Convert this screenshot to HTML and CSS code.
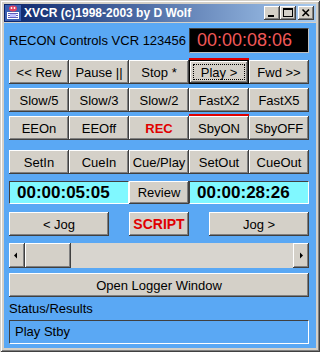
FILE: index.html
```html
<!DOCTYPE html>
<html>
<head>
<meta charset="utf-8">
<link rel="stylesheet" href="styles.css">
</head>
<body>
<div class="window">
  <div class="titlebar">
    <svg class="appicon" width="16" height="16" viewBox="0 0 16 16">
      <rect x="0" y="0" width="16" height="16" fill="#3a5fb0"/>
      <ellipse cx="8" cy="3.5" rx="4" ry="3" fill="#e04060"/>
      <circle cx="6.5" cy="3" r="0.9" fill="#fff"/>
      <circle cx="9.5" cy="3" r="0.9" fill="#fff"/>
      <path d="M2 7 H14 V14 H2 Z" fill="#fff"/>
      <path d="M3 8.5 H13 M3 10.5 H13 M3 12.5 H13" stroke="#6060c0" stroke-width="1"/>
      <rect x="5" y="9" width="6" height="3" fill="#c0c0ff"/>
    </svg>
    <span class="title">XVCR (c)1998-2003 by D Wolf</span>
    <div class="tbtns">
      <span class="tbtn"><svg width="16" height="14" viewBox="0 0 16 14"><rect x="4" y="9" width="6" height="2" fill="#000"/></svg></span>
      <span class="tbtn"><svg width="16" height="14" viewBox="0 0 16 14"><rect x="3.5" y="2.5" width="9" height="8" fill="none" stroke="#000"/><rect x="3" y="2" width="10" height="2" fill="#000"/></svg></span>
      <span class="tbtn close"><svg width="16" height="14" viewBox="0 0 16 14"><path d="M4.5 3.5 L11 10 M11 3.5 L4.5 10" stroke="#000" stroke-width="1.6"/></svg></span>
    </div>
  </div>
  <div class="client">
    <div class="header">
      <span class="label">RECON Controls VCR 123456</span>
      <div class="timer">00:00:08:06</div>
    </div>
    <div class="btnrow r1">
      <button class="btn">&lt;&lt; Rew</button>
      <button class="btn">Pause ||</button>
      <button class="btn">Stop *</button>
      <button class="btn active focus"><span class="focusrect">Play &gt;</span></button>
      <button class="btn">Fwd &gt;&gt;</button>
    </div>
    <div class="btnrow r2">
      <button class="btn">Slow/5</button>
      <button class="btn">Slow/3</button>
      <button class="btn">Slow/2</button>
      <button class="btn">FastX2</button>
      <button class="btn">FastX5</button>
    </div>
    <div class="btnrow r3">
      <button class="btn">EEOn</button>
      <button class="btn">EEOff</button>
      <button class="btn red">REC</button>
      <button class="btn active">SbyON</button>
      <button class="btn">SbyOFF</button>
    </div>
    <div class="btnrow r4">
      <button class="btn">SetIn</button>
      <button class="btn">CueIn</button>
      <button class="btn">Cue/Play</button>
      <button class="btn">SetOut</button>
      <button class="btn">CueOut</button>
    </div>
    <div class="timerow">
      <div class="tfield">00:00:05:05</div>
      <button class="btn">Review</button>
      <div class="tfield">00:00:28:26</div>
    </div>
    <div class="jogrow">
      <button class="btn">&lt; Jog</button>
      <button class="btn red script">SCRIPT</button>
      <button class="btn">Jog &gt;</button>
    </div>
    <div class="scrollbar">
      <span class="sbtn"><svg width="16" height="25" viewBox="0 0 16 25"><path d="M5 12.5 L8 9.5 V15.5 Z" fill="#000"/></svg></span>
      <span class="thumb"></span>
      <span class="track"></span>
      <span class="sbtn"><svg width="16" height="25" viewBox="0 0 16 25"><path d="M10 12.5 L7 9.5 V15.5 Z" fill="#000"/></svg></span>
    </div>
    <button class="btn logger">Open Logger Window</button>
    <div class="statuslabel">Status/Results</div>
    <div class="status">Play Stby</div>
  </div>
</div>
</body>
</html>
```
FILE: styles.css
```css
* { box-sizing: border-box; }
html, body { margin: 0; padding: 0; background: #d4d0c8; }
.window {
  width: 320px;
  height: 352px;
  background: #d4d0c8;
  padding: 4px;
  display: flex;
  flex-direction: column;
  box-shadow: inset 1px 1px #d4d0c8, inset -1px -1px #404040, inset 2px 2px #ffffff, inset -2px -2px #808080;
}
.titlebar {
  height: 18px;
  flex: none;
  display: flex;
  align-items: center;
  background: linear-gradient(to right, #0a246a, #a6caf0);
  padding-left: 1px;
  padding-right: 2px;
}
.appicon { flex: none; }
.title {
  font-family: "Liberation Sans", Arial, sans-serif;
  font-weight: bold;
  font-size: 12px;
  color: #fff;
  margin-left: 3px;
  white-space: nowrap;
  flex: 1;
}
.tbtns { display: flex; flex: none; }
.tbtn {
  width: 16px;
  height: 14px;
  background: #d4d0c8;
  display: block;
  box-shadow: inset -1px -1px #404040, inset 1px 1px #ffffff, inset -2px -2px #808080;
}
.tbtn svg { display: block; }
.tbtn.close { margin-left: 2px; }
.client {
  flex: 1;
  margin-top: 1px;
  background: #5aa8f4;
  padding: 5px 0 0 5px;
  display: flex;
  flex-direction: column;
  font-family: "Liberation Sans", Arial, sans-serif;
  font-size: 13px;
  color: #000;
}
.header {
  height: 25px;
  width: 300px;
  display: flex;
  align-items: center;
  justify-content: space-between;
}
.label { white-space: nowrap; }
.timer {
  width: 120px;
  height: 25px;
  background: #000;
  color: #f05858;
  font-size: 18px;
  line-height: 23px;
  padding-left: 7px;
  border: 1px solid;
  border-color: #404040 #c0c0c0 #c0c0c0 #404040;
}
.btnrow {
  width: 300px;
  display: grid;
  grid-template-columns: repeat(5, 60px);
  height: 24px;
}
.r1 { margin-top: 7px; }
.r2 { margin-top: 4px; }
.r3 { margin-top: 4px; }
.r4 { margin-top: 10px; }
.btn {
  margin: 0;
  padding: 0;
  border: none;
  background: #d4d0c8;
  font-family: "Liberation Sans", Arial, sans-serif;
  font-size: 13px;
  color: #000;
  height: 100%;
  box-shadow: inset -1px -1px #404040, inset 1px 1px #ffffff, inset -2px -2px #808080;
  white-space: nowrap;
  position: relative;
}
.btn.red { color: #e00000; font-weight: bold; }
.btn.active::before {
  content: "";
  position: absolute;
  left: 0;
  right: 0;
  top: -2px;
  height: 2px;
  background: #e00000;
}
.btn.focus {
  box-shadow: inset 1px 1px #000, inset -1px -1px #000, inset -2px -2px #404040, inset 2px 2px #ffffff, inset -3px -3px #808080;
}
.focusrect {
  position: absolute;
  left: 4px; right: 4px; top: 4px; bottom: 4px;
  border: 1px dotted #000;
  display: flex;
  align-items: center;
  justify-content: center;
}
.timerow {
  margin-top: 7px;
  width: 300px;
  height: 23px;
  display: grid;
  grid-template-columns: 120px 60px 120px;
}
.tfield {
  background: #80f8ff;
  font-weight: bold;
  font-size: 17px;
  line-height: 21px;
  padding-left: 7px;
  border: 1px solid;
  border-color: #404040 #ffffff #ffffff #404040;
}
.jogrow {
  margin-top: 8px;
  width: 300px;
  height: 24px;
  display: flex;
  justify-content: space-between;
}
.jogrow .btn { width: 100px; }
.jogrow .btn.script { width: 60px; font-size: 14px; }
.scrollbar {
  margin-top: 7px;
  width: 300px;
  height: 25px;
  display: flex;
  background: #e6e3de;
}
.sbtn {
  width: 16px;
  height: 25px;
  flex: none;
  background: #d4d0c8;
  box-shadow: inset -1px -1px #404040, inset 1px 1px #ffffff, inset -2px -2px #808080;
}
.sbtn svg { display: block; }
.thumb {
  width: 46px;
  flex: none;
  background: #d4d0c8;
  box-shadow: inset -1px -1px #404040, inset 1px 1px #ffffff, inset -2px -2px #808080;
}
.track { flex: 1; background: #d8d5cf; }
.btn.logger {
  margin-top: 5px;
  width: 300px;
  height: 24px;
  flex: none;
}
.statuslabel {
  margin-top: 4px;
  height: 16px;
  line-height: 16px;
}
.status {
  margin-top: 3px;
  width: 300px;
  height: 24px;
  line-height: 22px;
  padding-left: 5px;
  border: 1px solid;
  border-color: #404040 #ffffff #ffffff #404040;
}
```
